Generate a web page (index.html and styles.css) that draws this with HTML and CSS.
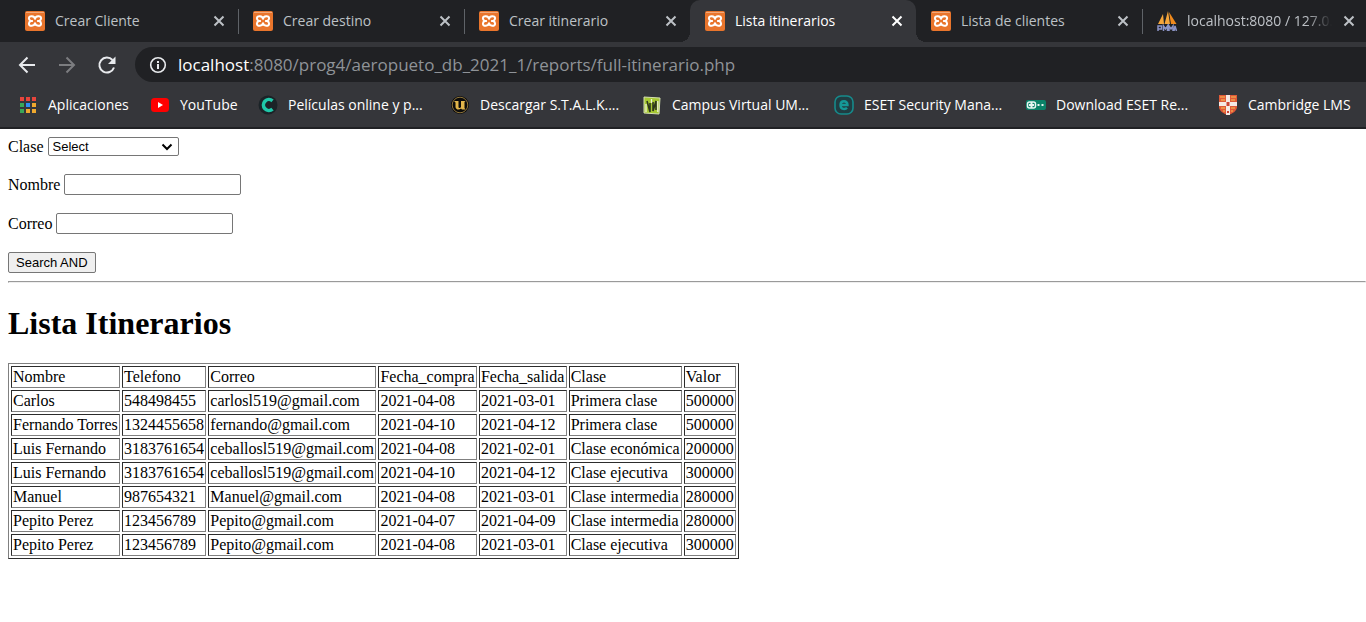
FILE: index.html
```html
<!DOCTYPE html>
<html lang="es">
<head>
<meta charset="utf-8">
<title>Lista itinerarios</title>
<link rel="stylesheet" href="styles.css">
</head>
<body>
<svg class="defs" aria-hidden="true">
  <symbol id="xampp" viewBox="0 0 20 20">
    <rect width="20" height="20" rx="2" fill="#e9752c"/>
    <path d="M1 1.500h18" stroke="#f3a878"/>
    <path d="M10 7.800C9.500 4.800 3.900 4 3.900 7.300c0 1.400.8 2.300 1.800 2.700-1 .4-1.800 1.300-1.800 2.700 0 3.300 5.600 2.500 6.100-.5.500 3 6.100 3.800 6.100.5 0-1.400-.8-2.300-1.800-2.700 1-.4 1.800-1.300 1.800-2.700 0-3.300-5.600-2.500-6.100.5zM5.700 10h2.200M12.100 10h2.200" fill="none" stroke="#fff" stroke-width="2" stroke-linejoin="round"/>
  </symbol>
  <symbol id="close" viewBox="0 0 14 14"><path d="M2.500 2.500l9 9m0-9l-9 9" fill="none" stroke="currentColor" stroke-width="2"/></symbol>
</svg>
<header class="browser">
  <div class="tabs">
    <div class="tab first"><svg class="icon"><use href="#xampp"/></svg><span class="title">Crear Cliente</span><button class="close" aria-label="Cerrar"><svg><use href="#close"/></svg></button></div>
    <div class="tab line"><svg class="icon"><use href="#xampp"/></svg><span class="title">Crear destino</span><button class="close" aria-label="Cerrar"><svg><use href="#close"/></svg></button></div>
    <div class="tab line"><svg class="icon"><use href="#xampp"/></svg><span class="title">Crear itinerario</span><button class="close" aria-label="Cerrar"><svg><use href="#close"/></svg></button></div>
    <div class="tab active"><svg class="icon"><use href="#xampp"/></svg><span class="title">Lista itinerarios</span><button class="close" aria-label="Cerrar"><svg><use href="#close"/></svg></button></div>
    <div class="tab"><svg class="icon"><use href="#xampp"/></svg><span class="title">Lista de clientes</span><button class="close" aria-label="Cerrar"><svg><use href="#close"/></svg></button></div>
    <div class="tab line"><svg class="icon" viewBox="0 0 20 20"><path d="M1 13L6 3l1 10zM7.500 13L11 0l2 13z" fill="#f6a63a"/><path d="M12 1l7.500 12H14z" fill="#f08a1c"/><path d="M1 20v-5h3.500v3H1M6.500 20v-5l2 3 2-3v5M12 20v-5l2 3 2-3v5M17 20l1-5 1.500 5" fill="none" stroke="#8c94c6" stroke-width="1.500"/></svg><span class="title fade">localhost:8080 / 127.0.0.1</span><button class="close" aria-label="Cerrar"><svg><use href="#close"/></svg></button></div>
  </div>
  <div class="toolbar">
    <button class="nav" aria-label="Atrás"><svg viewBox="0 0 20 20"><path d="M18 10H3m7.500-7.500L3 10l7.500 7.500" fill="none" stroke="currentColor" stroke-width="2"/></svg></button>
    <button class="nav dim" aria-label="Adelante"><svg viewBox="0 0 20 20"><path d="M2 10h15M9.500 2.500L17 10l-7.500 7.500" fill="none" stroke="currentColor" stroke-width="2"/></svg></button>
    <button class="nav" aria-label="Recargar"><svg viewBox="0 0 20 20"><path d="M17 12.500A7.500 7.500 0 1 1 15.500 5" fill="none" stroke="currentColor" stroke-width="2"/><path d="M18.500 1.500V9H11z" fill="currentColor"/></svg></button>
    <div class="omnibox"><svg class="info" viewBox="0 0 18 18"><circle cx="9" cy="9" r="7.300" fill="none" stroke="#e8eaed" stroke-width="1.600"/><path d="M9 8v5M9 5v2" stroke="#e8eaed" stroke-width="2"/></svg><span class="url"><b>localhost</b>:8080/prog4/aeropueto_db_2021_1/reports/full-itinerario.php</span></div>
  </div>
  <nav class="bookmarks">
    <a class="mark apps" href="#"><svg class="icon" viewBox="0 0 20 20"><g fill="#e8453c"><path d="M2 2h4v4H2zM8 2h4v4H8zM14 2h4v4h-4z"/></g><path d="M2 8h4v4H2zM2 14h4v4H2z" fill="#3aa757"/><path d="M8 8h4v4H8z" fill="#2f8ef4"/><path d="M14 8h4v4h-4zM14 14h4v4h-4zM8 14h4v4H8z" fill="#f0a92e"/></svg><span>Aplicaciones</span></a>
    <a class="mark tube" href="#"><svg class="icon" viewBox="0 0 20 20"><rect x="1" y="3" width="18" height="14" rx="3.500" fill="#f00"/><path d="M8 7l5 3-5 3z" fill="#fff"/></svg><span>YouTube</span></a>
    <a class="mark" href="#"><svg class="icon" viewBox="0 0 20 20"><circle cx="10" cy="10" r="9.500" fill="#1b2327"/><path d="M14.500 5.800a5.500 5.500 0 1 0 0 8.400" fill="none" stroke="#1fc8a9" stroke-width="3.600"/></svg><span>Películas online y p...</span></a>
    <a class="mark" href="#"><svg class="icon" viewBox="0 0 20 20"><circle cx="10" cy="10" r="9" fill="#0b0b0b"/><circle cx="10" cy="10" r="7.800" fill="none" stroke="#8e7439" stroke-width="1"/><path d="M4 6h4.500v6c0 1.300 2 1.300 2.500 0V6h4.500l-1 1v6l1 1.500H12l-1-1c-2 2-5.500 1-5.500-1.500V7.500z" fill="#e2b64b"/></svg><span>Descargar S.T.A.L.K....</span></a>
    <a class="mark" href="#"><svg class="icon" viewBox="0 0 20 20"><path d="M2 2l16 1-1 16-15-1z" fill="#a6c832" stroke="#d4dfb0"/><path d="M5 6l3 11V8M11 7v9l3-10v9" fill="none" stroke="#2e371c" stroke-width="1.600"/><path d="M4 9v8M9.500 4v4M15.800 6v11" stroke="#eef2d5" stroke-width="1.300"/></svg><span>Campus Virtual UM...</span></a>
    <a class="mark" href="#"><svg class="icon" viewBox="0 0 20 20"><rect x="1" y="1" width="18" height="18" rx="6" fill="#203d42" stroke="#168a8b" stroke-width="1.600"/><path d="M6.500 10h7c0-5-7-5-7 0s5 4.500 6.500 2.800" fill="none" stroke="#159897" stroke-width="2.400"/></svg><span>ESET Security Mana...</span></a>
    <a class="mark" href="#"><svg class="icon" viewBox="0 0 20 20"><rect y="5" width="20" height="10" rx="2" fill="#0b8268"/><rect x="1.500" y="7" width="8" height="6" rx="2" fill="none" stroke="#e8f5f1" stroke-width="1.500"/><path d="M5.500 7v6M3 10h5M11.500 10h2M15.500 10h2" stroke="#e8f5f1" stroke-width="2"/></svg><span>Download ESET Re...</span></a>
    <a class="mark" href="#"><svg class="icon" viewBox="0 0 20 20"><path d="M1 0h18v12c0 4-5 7-9 8-4-1-9-4-9-8z" fill="#df5a38"/><path d="M10 0v20M1 9h18" stroke="#f5e9e4" stroke-width="4"/><path d="M8.500 7h3v4h-3zM9 16h2v2H9z" fill="#c94334"/><path d="M2 2h5M13 2h5M3 5h4M13 5h4M3 13h4M13 13h4M5 16h2M13 16h2" stroke="#f0a04a" stroke-width="1.500"/></svg><span>Cambridge LMS</span></a>
  </nav>
</header>
<main class="page">
  <form class="search">
    <div class="field"><label for="clase">Clase</label><span class="picker"><select id="clase"><option>Select</option></select><svg class="chevron" viewBox="0 0 12 8"><path d="M1.500 1.500L6 6l4.500-4.500" fill="none" stroke="#000" stroke-width="2"/></svg></span></div>
    <div class="field"><label for="nombre">Nombre</label><input id="nombre" type="text"></div>
    <div class="field"><label for="correo">Correo</label><input id="correo" type="text"></div>
    <button class="submit" type="button">Search AND</button>
  </form>
  <hr>
  <h1>Lista Itinerarios</h1>
  <table border="1">
    <tr><td>Nombre</td><td>Telefono</td><td>Correo</td><td>Fecha_compra</td><td>Fecha_salida</td><td>Clase</td><td>Valor</td></tr>
    <tr><td>Carlos</td><td>548498455</td><td>carlosl519@gmail.com</td><td>2021-04-08</td><td>2021-03-01</td><td>Primera clase</td><td>500000</td></tr>
    <tr><td>Fernando Torres</td><td>1324455658</td><td>fernando@gmail.com</td><td>2021-04-10</td><td>2021-04-12</td><td>Primera clase</td><td>500000</td></tr>
    <tr><td>Luis Fernando</td><td>3183761654</td><td>ceballosl519@gmail.com</td><td>2021-04-08</td><td>2021-02-01</td><td>Clase económica</td><td>200000</td></tr>
    <tr><td>Luis Fernando</td><td>3183761654</td><td>ceballosl519@gmail.com</td><td>2021-04-10</td><td>2021-04-12</td><td>Clase ejecutiva</td><td>300000</td></tr>
    <tr><td>Manuel</td><td>987654321</td><td>Manuel@gmail.com</td><td>2021-04-08</td><td>2021-03-01</td><td>Clase intermedia</td><td>280000</td></tr>
    <tr><td>Pepito Perez</td><td>123456789</td><td>Pepito@gmail.com</td><td>2021-04-07</td><td>2021-04-09</td><td>Clase intermedia</td><td>280000</td></tr>
    <tr><td>Pepito Perez</td><td>123456789</td><td>Pepito@gmail.com</td><td>2021-04-08</td><td>2021-03-01</td><td>Clase ejecutiva</td><td>300000</td></tr>
  </table>
</main>
</body>
</html>
```

FILE: styles.css
```css
* { box-sizing: border-box; }
body {
  margin: 0;
  background: #fff;
  color: #000;
  font: 16px/18px "Liberation Serif", serif;
}
.defs { display: none; }
.browser {
  background: #35363a;
  border-bottom: 2px solid #202124;
  font-family: "Open Sans", "Noto Sans", sans-serif;
  overflow: hidden;
}
.browser button {
  display: flex;
  padding: 0;
  border: 0;
  background: none;
  color: inherit;
}
.icon { flex: none; width: 20px; height: 20px; }

.tabs {
  display: flex;
  height: 42px;
  padding-left: 10px;
  background: #202124;
}
.tab {
  position: relative;
  display: flex;
  align-items: center;
  flex: 0 0 226px;
  min-width: 0;
  gap: 10px;
  padding: 0 12px 0 15px;
  color: #bdc1c6;
  font-size: 14px;
}
.tab.first { flex-basis: 228px; }
.tab.line::before {
  content: "";
  position: absolute;
  left: 0;
  top: 9px;
  width: 1px;
  height: 25px;
  background: #5f6368;
}
.tab.active {
  background: #35363a;
  border-radius: 10px 10px 0 0;
  color: #fff;
}
.tab.active::before,
.tab.active::after {
  content: "";
  position: absolute;
  bottom: 0;
  width: 10px;
  height: 10px;
}
.tab.active::before {
  left: -10px;
  background: radial-gradient(circle at 0 0, transparent 10px, #35363a 10px);
}
.tab.active::after {
  right: -10px;
  background: radial-gradient(circle at 100% 0, transparent 10px, #35363a 10px);
}
.title {
  flex: 1;
  min-width: 0;
  overflow: hidden;
  white-space: nowrap;
}
.fade {
  -webkit-mask-image: linear-gradient(90deg, #000 82%, transparent);
  mask-image: linear-gradient(90deg, #000 82%, transparent);
}
.close { flex: none; }
.close svg { width: 14px; height: 14px; }

.toolbar {
  display: flex;
  align-items: center;
  gap: 20px;
  padding: 5px 0 5px 17px;
  color: #e8eaed;
}
.nav svg { width: 20px; height: 20px; }
.browser .dim { color: #7c7d80; }
.omnibox {
  display: flex;
  align-items: center;
  flex: 1;
  gap: 11px;
  height: 35px;
  margin-left: -2px;
  padding-left: 14px;
  border-radius: 18px 0 0 18px;
  background: #202124;
}
.info { width: 18px; height: 18px; }
.url { color: #8f9398; font-size: 17px; white-space: nowrap; }
.url b { color: #fff; font-weight: 400; }

.bookmarks {
  display: flex;
  gap: 20px;
  padding: 8px 0 12px 18px;
}
.mark {
  display: flex;
  align-items: center;
  flex: 0 0 172px;
  gap: 10px;
  color: #fff;
  font-size: 14px;
  text-decoration: none;
  white-space: nowrap;
}
.mark.apps { flex-basis: 112px; }
.mark.tube { flex-basis: 88px; }

.page { padding: 8px 0 8px 8px; }
.field {
  display: flex;
  align-items: center;
  gap: 4px;
  margin-bottom: 18px;
}
.picker { position: relative; display: flex; }
.picker select {
  appearance: none;
  width: 131px;
  height: 19px;
  padding: 0 4px;
  border: 1px solid #767676;
  border-radius: 2px;
  background: #fff;
  color: #000;
  font: 13px "Liberation Sans", sans-serif;
}
.chevron {
  position: absolute;
  right: 6px;
  top: 6px;
  width: 12px;
  height: 8px;
  pointer-events: none;
}
.field input {
  width: 177px;
  height: 21px;
  border: 1px solid #767676;
  border-radius: 2px;
}
.submit {
  display: block;
  height: 21px;
  padding: 0 7px;
  border: 1px solid #767676;
  border-radius: 2px;
  background: #efefef;
  color: #000;
  font: 13px "Liberation Sans", sans-serif;
}
hr { margin: 8px 0; }
h1 { margin: 22px 0 21px; font-size: 32px; line-height: 37px; }
table { min-width: 731px; }
```
